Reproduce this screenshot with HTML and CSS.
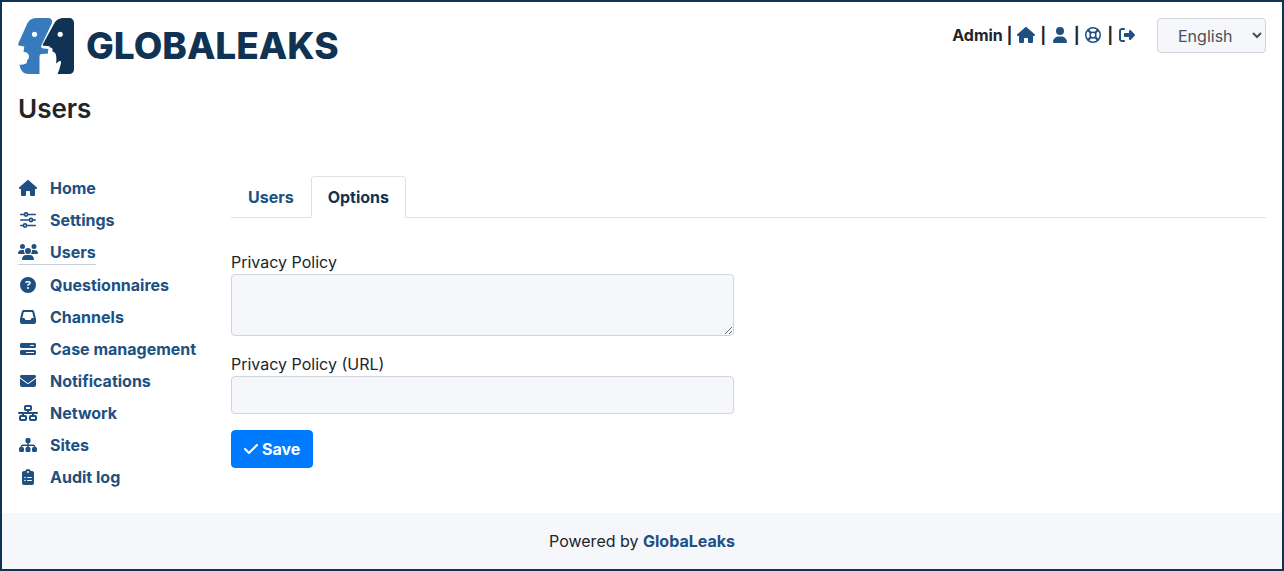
FILE: index.html
```html
<!DOCTYPE html>
<html lang="en">
<head>
<meta charset="utf-8">
<title>GlobaLeaks - Users</title>
<link rel="stylesheet" href="styles.css">
</head>
<body>
<svg class="sprite" aria-hidden="true">
  <symbol id="house" viewBox="0 0 576 512"><path d="M575.8 255.5c0 18-15 32.1-32 32.1h-32l.7 160.2c0 2.7-.2 5.4-.5 8.1V472c0 22.1-17.9 40-40 40H456c-1.1 0-2.2 0-3.3-.1c-1.4 .1-2.8 .1-4.2 .1H416 392c-22.1 0-40-17.9-40-40V448 384c0-17.700-14.300-32-32-32H256c-17.700 0-32 14.300-32 32v64 24c0 22.100-17.900 40-40 40H160 128.100c-1.500 0-3-.1-4.500-.2c-1.200 .1-2.400 .2-3.600 .2H104c-22.100 0-40-17.900-40-40V360c0-.9 0-1.900 .1-2.800V287.600H32c-18 0-32-14-32-32.100c0-9 3-17 10-24L266.400 8c7-7 15-8 22-8s15 2 21 7L564.800 231.500c8 7 12 15 11 24z"/></symbol>
  <symbol id="user" viewBox="0 0 448 512"><path d="M224 256A128 128 0 1 0 224 0a128 128 0 1 0 0 256zm-45.700 48C79.800 304 0 383.800 0 482.300C0 498.700 13.300 512 29.700 512H418.300c16.400 0 29.700-13.300 29.700-29.700C448 383.800 368.200 304 269.700 304H178.300z"/></symbol>
  <symbol id="ring" viewBox="0 0 512 512"><g fill="none" stroke="currentColor" stroke-width="48"><circle cx="256" cy="256" r="232"/><circle cx="256" cy="256" r="92"/><path stroke-width="72" d="M98 98l92 92M414 98l-92 92M98 414l92-92M414 414l-92-92"/></g></symbol>
  <symbol id="exit" viewBox="0 0 512 512"><path d="M377.900 105.900L500.700 228.700c7.200 7.200 11.300 17.100 11.300 27.300s-4.100 20.100-11.300 27.300L377.900 406.100c-6.400 6.400-15 9.900-24 9.900c-18.700 0-33.900-15.200-33.900-33.900l0-62.100-128 0c-17.700 0-32-14.300-32-32l0-64c0-17.700 14.300-32 32-32l128 0 0-62.100c0-18.700 15.200-33.900 33.900-33.900c9 0 17.600 3.600 24 9.900zM160 96L96 96c-17.700 0-32 14.300-32 32l0 256c0 17.700 14.300 32 32 32l64 0c17.700 0 32 14.300 32 32s-14.300 32-32 32l-64 0c-53 0-96-43-96-96L0 128C0 75 43 32 96 32l64 0c17.700 0 32 14.300 32 32s-14.300 32-32 32z"/></symbol>
  <symbol id="sliders" viewBox="0 0 512 512"><g fill="none" stroke="currentColor" stroke-width="52" stroke-linecap="round"><path d="M24 80h104M256 80h232M24 256h264M416 256h72M24 432h72M224 432h264"/><circle cx="192" cy="80" r="52"/><circle cx="352" cy="256" r="52"/><circle cx="160" cy="432" r="52"/></g></symbol>
  <symbol id="users" viewBox="0 0 640 512"><path d="M144 0a80 80 0 1 1 0 160A80 80 0 1 1 144 0zM512 0a80 80 0 1 1 0 160A80 80 0 1 1 512 0zM0 298.700C0 239.800 47.800 192 106.700 192h42.700c15.900 0 31 3.500 44.600 9.700c-1.300 7.200-1.900 14.700-1.900 22.300c0 38.200 16.800 72.500 43.300 96H21.300C9.600 320 0 310.400 0 298.700zM405.300 320c26.600-23.500 43.300-57.800 43.300-96c0-7.600-.7-15-1.900-22.300c13.600-6.300 28.700-9.700 44.600-9.700h42.700C592.200 192 640 239.800 640 298.700c0 11.800-9.600 21.300-21.300 21.300H405.300zM224 224a96 96 0 1 1 192 0 96 96 0 1 1 -192 0zM128 485.300C128 411.700 187.700 352 261.300 352H378.700C452.300 352 512 411.700 512 485.300c0 14.700-11.900 26.700-26.700 26.700H154.700c-14.700 0-26.700-11.900-26.700-26.700z"/></symbol>
  <symbol id="question" viewBox="0 0 512 512"><path fill-rule="evenodd" d="M256 512A256 256 0 1 0 256 0a256 256 0 1 0 0 512zM169.800 165.300c7.900-22.300 29.100-37.300 52.800-37.300h58.300c34.900 0 63.100 28.300 63.100 63.100c0 22.600-12.100 43.500-31.700 54.800L280 264.400c-.2 13-10.900 23.600-24 23.600c-13.300 0-24-10.700-24-24V250.500c0-8.600 4.600-16.500 12.100-20.800l44.300-25.400c4.700-2.700 7.600-7.700 7.600-13.100c0-8.400-6.800-15.100-15.100-15.100H222.600c-3.400 0-6.400 2.100-7.500 5.300l-.4 1.200c-4.400 12.500-18.200 19-30.600 14.600s-19-18.200-14.600-30.600l.4-1.200zM224 352a32 32 0 1 1 64 0 32 32 0 1 1 -64 0z"/></symbol>
  <symbol id="inbox" viewBox="0 0 512 512"><path fill-rule="evenodd" d="M121 32C91.600 32 66 52 58.900 80.500L1.900 308.400C.6 313.500 0 318.700 0 323.900V416c0 35.300 28.700 64 64 64H448c35.300 0 64-28.700 64-64V323.900c0-5.200-.6-10.400-1.900-15.500l-57-227.900C446 52 420.400 32 391 32H121zm0 64H391l48 192H387.800c-12.100 0-23.200 6.800-28.600 17.700l-14.300 28.600c-5.400 10.800-16.500 17.700-28.600 17.700H195.800c-12.100 0-23.200-6.800-28.600-17.700l-14.300-28.600c-5.400-10.800-16.500-17.700-28.600-17.700H73L121 96z"/></symbol>
  <symbol id="progress" viewBox="0 0 512 512"><path fill-rule="evenodd" d="M448 160H320V128H448v32zM48 64C21.500 64 0 85.500 0 112v64c0 26.500 21.500 48 48 48H464c26.500 0 48-21.500 48-48V112c0-26.500-21.500-48-48-48H48zM448 352v32H192V352H448zM48 288c-26.500 0-48 21.500-48 48v64c0 26.500 21.500 48 48 48H464c26.500 0 48-21.500 48-48V336c0-26.500-21.500-48-48-48H48z"/></symbol>
  <symbol id="envelope" viewBox="0 0 512 512"><path d="M48 64C21.500 64 0 85.500 0 112c0 15.100 7.100 29.300 19.200 38.400L236.800 313.600c11.400 8.500 27 8.500 38.400 0L492.800 150.400c12.100-9.100 19.200-23.300 19.200-38.400c0-26.500-21.500-48-48-48H48zM0 176V384c0 35.300 28.700 64 64 64H448c35.300 0 64-28.700 64-64V176L294.400 339.200c-22.800 17.100-54 17.100-76.800 0L0 176z"/></symbol>
  <symbol id="network" viewBox="0 0 640 512"><g fill="none" stroke="currentColor" stroke-width="64"><rect x="224" y="32" width="192" height="128" rx="24"/><rect x="64" y="352" width="192" height="128" rx="24"/><rect x="384" y="352" width="192" height="128" rx="24"/><path stroke-linecap="round" d="M32 256h576"/><path d="M320 160v96M160 256v96M480 256v96"/></g></symbol>
  <symbol id="sitemap" viewBox="0 0 576 512"><rect x="208" y="32" width="160" height="160" rx="48"/><rect x="0" y="320" width="160" height="160" rx="48"/><rect x="208" y="320" width="160" height="160" rx="48"/><rect x="416" y="320" width="160" height="160" rx="48"/><path fill="none" stroke="currentColor" stroke-width="48" d="M288 180v150M80 330v-34q0-32 32-32h352q32 0 32 32v34"/></symbol>
  <symbol id="clipboard" viewBox="0 0 384 512"><path fill-rule="evenodd" d="M192 0c-41.800 0-77.400 26.700-90.500 64H64C28.700 64 0 92.700 0 128V448c0 35.300 28.700 64 64 64H320c35.300 0 64-28.700 64-64V128c0-35.300-28.700-64-64-64H282.500C269.400 26.700 233.800 0 192 0zm0 64a32 32 0 1 1 0 64 32 32 0 1 1 0-64zM72 272a24 24 0 1 1 48 0 24 24 0 1 1 -48 0zm104-16H304c8.800 0 16 7.200 16 16s-7.200 16-16 16H176c-8.800 0-16-7.200-16-16s7.200-16 16-16zM72 368a24 24 0 1 1 48 0 24 24 0 1 1 -48 0zm88 0c0-8.800 7.200-16 16-16H304c8.800 0 16 7.200 16 16s-7.200 16-16 16H176c-8.800 0-16-7.200-16-16z"/></symbol>
  <symbol id="check" viewBox="0 0 448 512"><path d="M438.600 105.400c12.500 12.500 12.500 32.800 0 45.300l-256 256c-12.500 12.500-32.800 12.500-45.300 0l-128-128c-12.500-12.500-12.500-32.800 0-45.300s32.800-12.500 45.300 0L160 338.700 393.400 105.400c12.500-12.500 32.800-12.500 45.300 0z"/></symbol>
</svg>

<div class="page">
  <header class="header">
    <a class="brand" href="#" aria-label="GlobaLeaks">
      <svg class="brand-mark" viewBox="0 0 56 56" aria-hidden="true">
        <path fill="#377bbc" d="M19 0h11c3.500 0 5 2.500 3.500 6L23.500 27c-1 2.500 0 3.500 2.500 3.500l4.500 .5-.5 2v2.500l-6 .5c-2 0-2.500 1-2.500 3V56H11C5.500 56 2.500 53 1.500 46.500c2 .5 4.500 0 6-.7 1.700-.8 1.500-2 1.500-3.300 2-1.500 2.500-4 1.500-6-1-2-3-2.500-5-2.500l.8-5.500L.5 27.500c-.5-.8-.3-1.500 0-2.500L9.500 5c2-3.500 5-5 9.500-5z"/>
        <path fill="#103253" d="M46.500 0H51c3 0 5 2 5 5v46c0 3-2 5-5 5H39.500c1.500-3 2.500-7 3.500-11 .5-2-1-2.500-2.300-1.500L38 45.500c.5-3 .5-6 0-8.500-.5-2-1.500-3-3.500-3.500V31c-.3-1.500-1.500-1.500-3-1.500l.3-1.300-6-.4c-1 0-1.300-.8-.8-1.800L36.500 5c2-3.500 5-5 10-5z"/>
        <circle cx="16.500" cy="16.300" r="2.600" fill="#fff"/><circle cx="42.200" cy="16.300" r="2.600" fill="#fff"/>
      </svg>
      <span class="brand-name">GLOBALEAKS</span>
    </a>
    <div class="tools">
      <nav class="session" aria-label="Session">
        <span>Admin | </span><a href="#" aria-label="Home"><svg class="icon"><use href="#house"/></svg></a>
        <span>|</span> <a href="#" aria-label="Preferences"><svg class="icon"><use href="#user"/></svg></a>
        <span>|</span> <a href="#" aria-label="Help"><svg class="icon"><use href="#ring"/></svg></a>
        <span>|</span> <a href="#" aria-label="Logout"><svg class="icon"><use href="#exit"/></svg></a>
      </nav>
      <select class="language" aria-label="Language"><option>English</option></select>
    </div>
  </header>

  <h1 class="title">Users</h1>

  <div class="layout">
    <nav class="sidebar" aria-label="Administration">
      <a href="#"><svg class="icon"><use href="#house"/></svg>Home</a>
      <a href="#"><svg class="icon"><use href="#sliders"/></svg>Settings</a>
      <a href="#" class="active"><svg class="icon"><use href="#users"/></svg>Users</a>
      <a href="#"><svg class="icon"><use href="#question"/></svg>Questionnaires</a>
      <a href="#"><svg class="icon"><use href="#inbox"/></svg>Channels</a>
      <a href="#"><svg class="icon"><use href="#progress"/></svg>Case management</a>
      <a href="#"><svg class="icon"><use href="#envelope"/></svg>Notifications</a>
      <a href="#"><svg class="icon"><use href="#network"/></svg>Network</a>
      <a href="#"><svg class="icon"><use href="#sitemap"/></svg>Sites</a>
      <a href="#"><svg class="icon"><use href="#clipboard"/></svg>Audit log</a>
    </nav>
    <main class="content">
      <nav class="tabs" aria-label="Sections">
        <a href="#">Users</a>
        <a href="#" class="active">Options</a>
      </nav>
      <form class="form">
        <div class="field">
          <label for="policy">Privacy Policy</label>
          <textarea id="policy" rows="2"></textarea>
        </div>
        <div class="field">
          <label for="policy-url">Privacy Policy (URL)</label>
          <input id="policy-url" type="text">
        </div>
        <button class="save" type="button"><svg class="icon"><use href="#check"/></svg>Save</button>
      </form>
    </main>
  </div>

  <footer class="footer">Powered by <a href="#">GlobaLeaks</a></footer>
</div>
</body>
</html>
```
FILE: styles.css
```css
*, *::before, *::after { box-sizing: border-box; }

body {
  margin: 0;
  background: #fff;
  color: #212529;
  font: 16px/24px Inter, "Liberation Sans", sans-serif;
}

a { color: #205081; font-weight: 700; text-decoration: none; }

.sprite { display: none; }
.icon { display: block; width: 20px; height: 16px; fill: currentColor; flex: none; }

.page {
  display: flex;
  flex-direction: column;
  min-height: 100vh;
  border: 2px solid #103253;
}

.header {
  display: flex;
  justify-content: space-between;
  align-items: flex-start;
  padding: 16px 16px 0;
}
.brand { display: flex; align-items: center; gap: 12px; color: #103253; }
.brand-mark { width: 56px; height: 56px; }
.brand-name { font-size: 37px; font-weight: 800; line-height: 56px; }

.tools { display: flex; align-items: flex-start; gap: 20px; }
.session { padding: 5px 0; font-weight: 700; }
.session .icon { display: inline-block; vertical-align: -2px; }
.language {
  height: 35px;
  padding: 4px 0 4px 16px;
  width: 109px;
  border: 1px solid #ced4da;
  border-radius: 4px;
  background: #f5f7fb;
  color: #495057;
  font: inherit;
}

.title { margin: 16px 16px 48px; font-size: 26px; line-height: 38px; font-weight: 600; }

.layout {
  display: grid;
  grid-template-columns: repeat(12, minmax(0, 1fr));
  column-gap: 30px;
  padding: 0 16px 24px;
}
.sidebar {
  grid-column: span 2;
  display: flex;
  flex-direction: column;
  align-items: flex-start;
  gap: 8px;
}
.sidebar a { display: flex; align-items: center; gap: 12px; white-space: nowrap; }
.sidebar .active { border-bottom: 1px solid #c5cde0; }

.content { grid-column: span 10; }
.tabs { display: flex; border-bottom: 1px solid #dee2e6; margin-bottom: 32px; }
.tabs a {
  padding: 8px 16px;
  margin-bottom: -1px;
  border: 1px solid transparent;
  border-radius: 4px 4px 0 0;
}
.tabs .active { border-color: #dee2e6 #dee2e6 #fff; background: #fff; color: #103253; }

.form {
  display: flex;
  flex-direction: column;
  align-items: flex-start;
  gap: 16px;
}
.field { width: calc(50% - 15px); }
.field label { display: block; }
.field input, .field textarea {
  display: block;
  width: 100%;
  padding: 6px 12px;
  border: 1px solid #ced4da;
  border-radius: 4px;
  background: #f5f7fb;
  color: #495057;
  font: inherit;
}
.field input { height: 38px; }
.field textarea { height: 62px; resize: vertical; }

.save {
  display: flex;
  align-items: center;
  gap: 4px;
  padding: 6px 12px;
  border: 1px solid #007bff;
  border-radius: 4px;
  background: #007bff;
  color: #fff;
  font: inherit;
  font-weight: 700;
}
.save .icon { width: 14px; }

.footer {
  margin-top: auto;
  padding: 16px;
  background: #f5f7fb;
  text-align: center;
}
```
